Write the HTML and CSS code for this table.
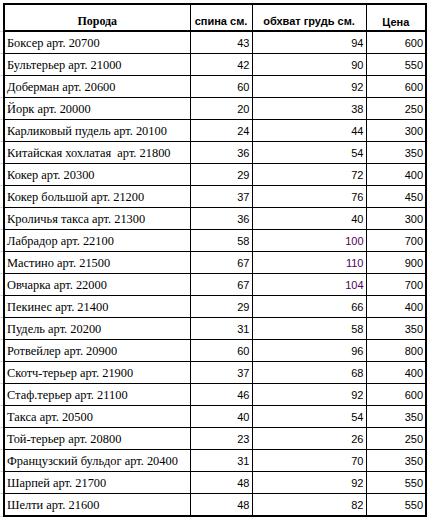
FILE: index.html
```html
<!DOCTYPE html>
<html lang="ru">
<head>
<meta charset="utf-8">
<title>Породы</title>
<link rel="stylesheet" href="styles.css">
</head>
<body>
<table class="sheet">
  <colgroup>
    <col class="c-gutter">
    <col class="c-name">
    <col class="c-back">
    <col class="c-chest">
    <col class="c-price">
  </colgroup>
  <thead>
    <tr class="head">
      <td class="gutter head-gutter"></td>
      <th class="h-name">Порода</th>
      <th class="h-num">спина см.</th>
      <th class="h-num">обхват грудь см.</th>
      <th class="h-num h-price">Цена</th>
    </tr>
  </thead>
  <tbody>
    <tr><td class="gutter"></td><td class="name">Боксер арт. 20700</td><td class="num">43</td><td class="num">94</td><td class="num">600</td></tr>
    <tr><td class="gutter"></td><td class="name">Бультерьер арт. 21000</td><td class="num">42</td><td class="num">90</td><td class="num">550</td></tr>
    <tr><td class="gutter"></td><td class="name">Доберман арт. 20600</td><td class="num">60</td><td class="num">92</td><td class="num">600</td></tr>
    <tr><td class="gutter"></td><td class="name">Йорк арт. 20000</td><td class="num">20</td><td class="num">38</td><td class="num">250</td></tr>
    <tr><td class="gutter"></td><td class="name">Карликовый пудель арт. 20100</td><td class="num">24</td><td class="num">44</td><td class="num">300</td></tr>
    <tr><td class="gutter"></td><td class="name">Китайская хохлатая&nbsp; арт. 21800</td><td class="num">36</td><td class="num">54</td><td class="num">350</td></tr>
    <tr><td class="gutter"></td><td class="name">Кокер арт. 20300</td><td class="num">29</td><td class="num">72</td><td class="num">400</td></tr>
    <tr><td class="gutter"></td><td class="name">Кокер большой арт. 21200</td><td class="num">37</td><td class="num">76</td><td class="num">450</td></tr>
    <tr><td class="gutter"></td><td class="name">Кроличья такса арт. 21300</td><td class="num">36</td><td class="num">40</td><td class="num">300</td></tr>
    <tr><td class="gutter"></td><td class="name">Лабрадор арт. 22100</td><td class="num">58</td><td class="num accent">100</td><td class="num">700</td></tr>
    <tr><td class="gutter"></td><td class="name">Мастино арт. 21500</td><td class="num">67</td><td class="num accent">110</td><td class="num">900</td></tr>
    <tr><td class="gutter"></td><td class="name">Овчарка арт. 22000</td><td class="num">67</td><td class="num accent">104</td><td class="num">700</td></tr>
    <tr><td class="gutter"></td><td class="name">Пекинес арт. 21400</td><td class="num">29</td><td class="num">66</td><td class="num">400</td></tr>
    <tr><td class="gutter"></td><td class="name">Пудель арт. 20200</td><td class="num">31</td><td class="num">58</td><td class="num">350</td></tr>
    <tr><td class="gutter"></td><td class="name">Ротвейлер арт. 20900</td><td class="num">60</td><td class="num">96</td><td class="num">800</td></tr>
    <tr><td class="gutter"></td><td class="name">Скотч-терьер арт. 21900</td><td class="num">37</td><td class="num">68</td><td class="num">400</td></tr>
    <tr><td class="gutter"></td><td class="name">Стаф.терьер арт. 21100</td><td class="num">46</td><td class="num">92</td><td class="num">600</td></tr>
    <tr><td class="gutter"></td><td class="name">Такса арт. 20500</td><td class="num">40</td><td class="num">54</td><td class="num">350</td></tr>
    <tr><td class="gutter"></td><td class="name">Той-терьер арт. 20800</td><td class="num">23</td><td class="num">26</td><td class="num">250</td></tr>
    <tr><td class="gutter"></td><td class="name">Французский бульдог арт. 20400</td><td class="num">31</td><td class="num">70</td><td class="num">350</td></tr>
    <tr><td class="gutter"></td><td class="name">Шарпей арт. 21700</td><td class="num">48</td><td class="num">92</td><td class="num">550</td></tr>
    <tr class="last"><td class="gutter"></td><td class="name">Шелти арт. 21600</td><td class="num">48</td><td class="num">82</td><td class="num">550</td></tr>
  </tbody>
</table>
</body>
</html>
```

FILE: styles.css
```css
html, body {
  margin: 0;
  padding: 0;
  background: #ffffff;
}

body {
  padding-top: 3px;
}

.sheet {
  border-collapse: collapse;
  table-layout: fixed;
  width: 427px;
  color: #000000;
}

.c-gutter { width: 4px; }
.c-name { width: 186px; }
.c-back { width: 62px; }
.c-chest { width: 114px; }
.c-price { width: 60px; }

.gutter {
  padding: 0;
  border: none;
  border-bottom: 1px solid #d9d9d9;
}

.head-gutter {
  border-bottom: 1px solid #d9d9d9;
}

.head th {
  height: 23px;
  padding: 0 1px 2px;
  vertical-align: bottom;
  text-align: center;
  border-top: 2px solid #000;
  border-bottom: 2px solid #000;
  border-left: 1px solid #000;
  border-right: 1px solid #000;
  line-height: 13px;
  white-space: nowrap;
}

.head th.h-name {
  border-left: 2px solid #000;
  font-family: "Liberation Serif", "Times New Roman", serif;
  font-size: 12px;
  font-weight: bold;
}

.head th.h-num {
  font-family: "Liberation Sans", Arial, sans-serif;
  font-size: 11px;
  font-weight: bold;
}

.head th.h-price {
  border-right: 2px solid #000;
  padding-bottom: 1px;
}

tbody td.name,
tbody td.num {
  height: 18px;
  padding: 0 2px 3px;
  vertical-align: bottom;
  border: 1px solid #000;
  line-height: 14px;
  white-space: nowrap;
  overflow: hidden;
}

tbody td.name {
  border-left: 2px solid #000;
  font-family: "Liberation Serif", "Times New Roman", serif;
  font-size: 12.4px;
  text-align: left;
}

tbody td.num {
  font-family: "Liberation Sans", Arial, sans-serif;
  font-size: 11px;
  text-align: right;
}

tbody td.num:last-child {
  border-right: 2px solid #000;
}

tbody tr.last td.name,
tbody tr.last td.num {
  border-bottom: 2px solid #000;
}

.accent {
  color: #50005a;
}
```
